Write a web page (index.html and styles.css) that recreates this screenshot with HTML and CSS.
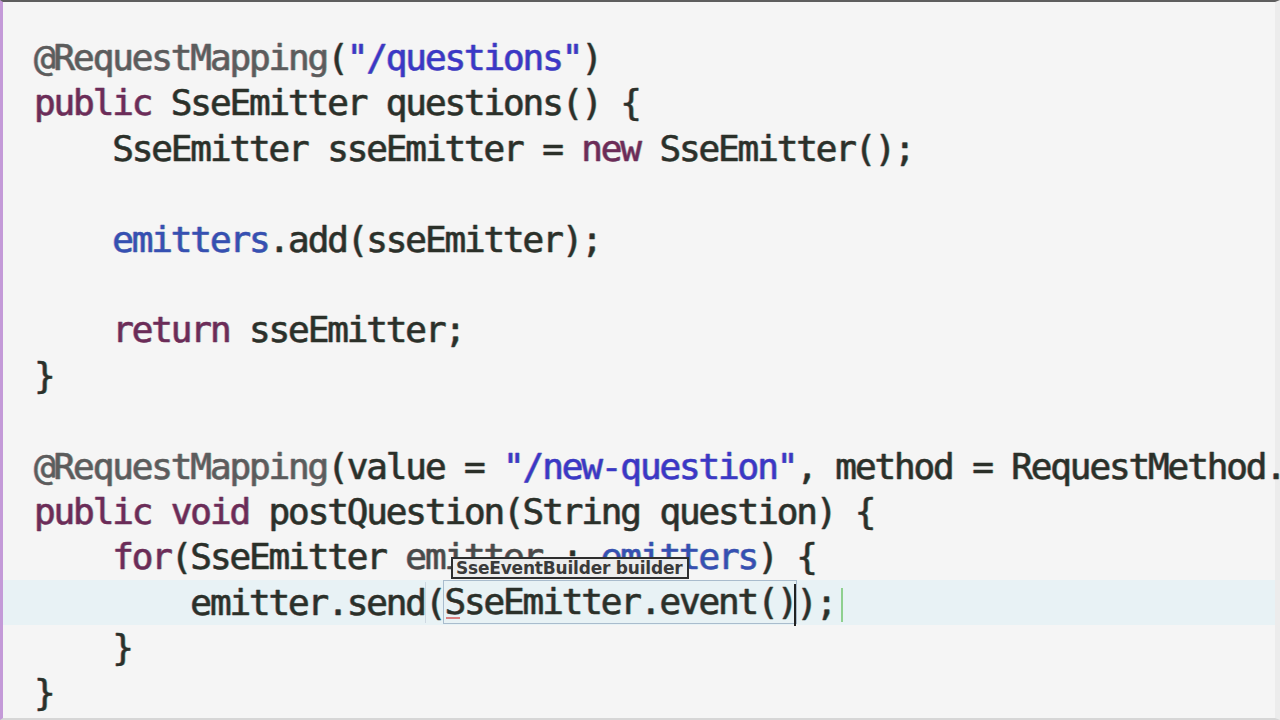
FILE: index.html
```html
<!DOCTYPE html>
<html>
<head>
<meta charset="utf-8">
<link rel="stylesheet" href="styles.css">
</head>
<body>
<div class="editor">
  <div class="line"><span class="ann">@RequestMapping</span>(<span class="str">"/questions"</span>)</div>
  <div class="line"><span class="kw">public</span> SseEmitter questions() {</div>
  <div class="line">    SseEmitter sseEmitter = <span class="kw">new</span> SseEmitter();</div>
  <div class="line"> </div>
  <div class="line">    <span class="fld">emitters</span>.add(sseEmitter);</div>
  <div class="line"> </div>
  <div class="line">    <span class="kw">return</span> sseEmitter;</div>
  <div class="line">}</div>
  <div class="line"> </div>
  <div class="line"><span class="ann">@RequestMapping</span>(value = <span class="str">"/new-question"</span>, method = RequestMethod.</div>
  <div class="line"><span class="kw">public</span> <span class="kw">void</span> postQuestion(String question) {</div>
  <div class="line tip-host">    <span class="kw">for</span>(SseEmitter <span class="var">emitter</span> : <span class="fld">emitters</span>) {<span class="tooltip">SseEventBuilder builder</span></div>
  <div class="line current">        emitter.send<span class="paren">(</span><span class="linked"><span class="squig">S</span>seEmitter.event()</span><span class="caret"></span>);<span class="exit"></span></div>
  <div class="line">    }</div>
  <div class="line">}</div>
</div>
</body>
</html>
```
FILE: styles.css
```css
html, body {
  margin: 0;
  padding: 0;
  width: 1280px;
  height: 720px;
  overflow: hidden;
  background: #f5f5f5;
}

.editor {
  box-sizing: border-box;
  height: 720px;
  border-top: 2px solid #5e5e5e;
  border-left: 3px solid #c49ad8;
  border-bottom: 2px solid #d6d6d6;
  border-right: 5px solid #ececec;
  padding: 33px 0 0 31px;
  background: #f5f5f5;
  font-family: "DejaVu Sans Mono", "Liberation Mono", monospace;
  font-size: 36px;
  letter-spacing: -2.13px;
  color: #2b3029;
  -webkit-text-stroke: 0.45px currentColor;
  text-shadow: -1px 0 rgba(170, 40, 170, 0.3), 1px 0 rgba(40, 150, 40, 0.3);
}

.line {
  height: 45.4px;
  line-height: 45.4px;
  white-space: pre;
  position: relative;
}

.current {
  margin-left: -31px;
  padding-left: 31px;
  background: #e8f2f5;
}

.kw { color: #6b2c58; }
.ann { color: #5c5c5c; }
.str { color: #3a38c6; }
.fld { color: #3550b2; }
.var { color: #4a4a4a; }

.paren {
  box-shadow: inset 3px 0 0 -2px #cfd9e2;
}

.linked {
  display: inline-block;
  height: 42px;
  line-height: 42px;
  vertical-align: top;
  margin-top: 1px;
  outline: 1px solid #a9bccd;
}

.squig {
  position: relative;
}
.squig::after {
  content: "";
  position: absolute;
  left: 2px;
  bottom: 3px;
  width: 14px;
  height: 2px;
  background: #d98080;
}

.caret {
  display: inline-block;
  width: 2px;
  height: 42px;
  margin-left: -2px;
  vertical-align: middle;
  background: #222;
}

.exit {
  display: inline-block;
  width: 2px;
  height: 34px;
  margin-left: 6px;
  vertical-align: middle;
  background: #8fd08f;
}

.tooltip {
  position: absolute;
  left: 417px;
  top: 23px;
  height: 18px;
  line-height: 18px;
  padding: 0 5px 0 3px;
  border: 2px solid #2e2e2e;
  background: #ededed;
  font-family: "DejaVu Sans", "Liberation Sans", sans-serif;
  font-weight: bold;
  font-size: 17px;
  letter-spacing: -0.2px;
  color: #3a3a3a;
  -webkit-text-stroke: 0;
  text-shadow: none;
  white-space: nowrap;
}
```
